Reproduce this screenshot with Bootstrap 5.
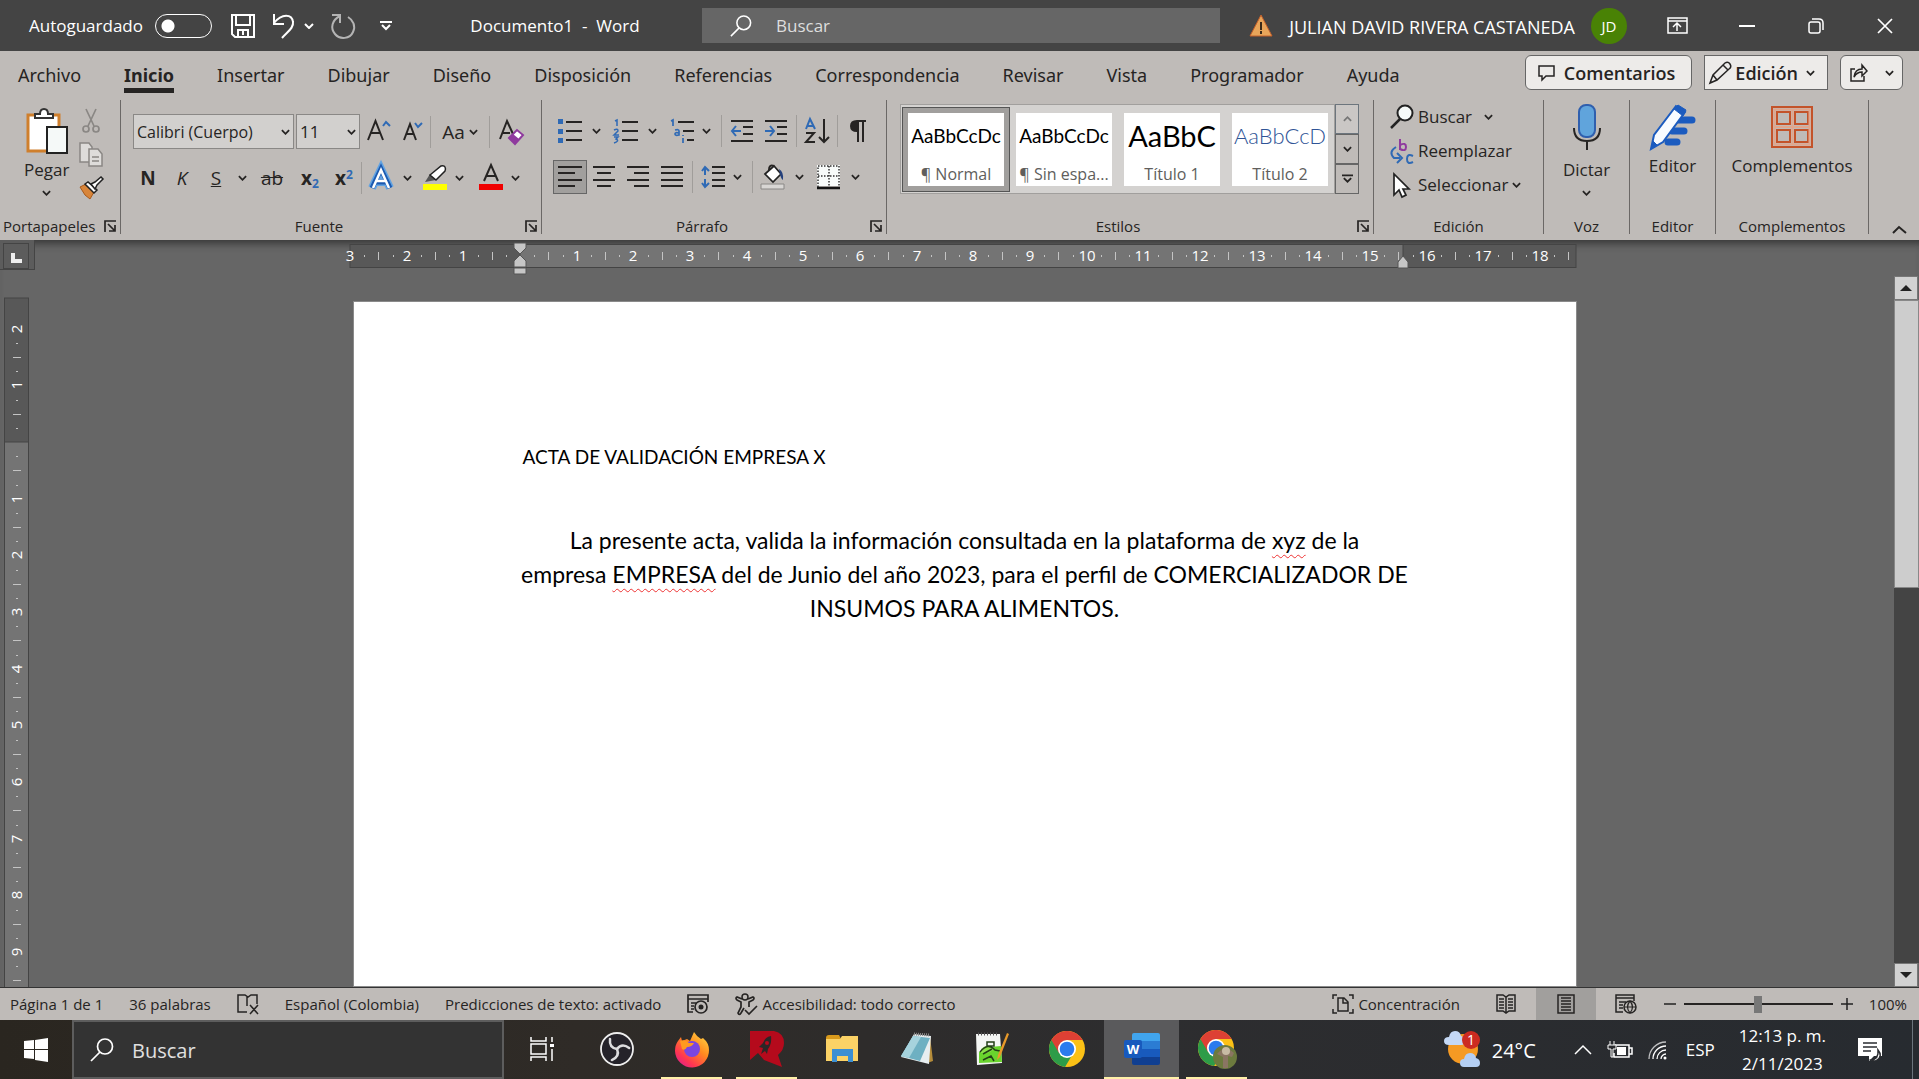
<!DOCTYPE html>
<html lang="es">
<head>
<meta charset="utf-8">
<meta name="viewport" content="width=device-width, initial-scale=1">
<title>Documento1 - Word</title>
<link href="https://cdn.jsdelivr.net/npm/bootstrap@5.3.0/dist/css/bootstrap.min.css" rel="stylesheet">
<style>
:root{--ink:#262423;--face:#bfbbb8;--bar:#444;--desk:#666;--blue:#2f6ab5}
body{font-family:"Open Sans","Noto Sans",sans-serif;font-size:17px;line-height:24px;color:var(--ink);background:var(--desk)}
button,input,select{font-family:inherit;color:inherit}
button{background:none;border:0;padding:0;line-height:inherit}
svg{display:block;flex:none;overflow:visible}
.ln{fill:none;stroke:currentColor;stroke-width:2}
.titlebar{height:51px;background:var(--bar);color:#fff}
.quick{width:702px;gap:16px;padding-left:29px}
.auto-sw.form-check-input{width:57px;height:24px;margin:0 2px 0 12px;float:none;background-color:transparent;border:1px solid #fff;border-radius:12px;background-image:radial-gradient(circle at 12px 50%,#fff 6px,transparent 7px)!important}
.finder{width:518px;height:35px;background:var(--desk)}
.finder input,.tasksearch input{background:none;border:0;outline:0;min-width:0}
.finder input::placeholder{color:#dedede;opacity:1}
.user{font-size:18px;padding-top:2px}
.avatar{width:36px;height:36px;background:#498205;font-size:15px}
.winbtn{width:69px;height:51px}
.ribbon{background:var(--face);height:189px}
.tabs{height:49px}
.tabs a{color:var(--ink);text-decoration:none;font-family:"Noto Sans","Open Sans",sans-serif;font-size:18px;padding:12px 25px 0 18px;display:block}
.tabs a span{display:block;height:29px}
.tabs a.on{font-weight:700}
.tabs a.on span{border-bottom:5px solid var(--ink);height:30px}
.pill{height:35px;background:#edebe9;border:1px solid #666;border-radius:6px;font-weight:600;font-size:18px}
.grp{height:134px;border-right:1px solid #6b6866}
.grp .body-area{height:116px}
.grplabel{font-size:15px;line-height:20px;height:20px}
.clips{margin-left:10px}
.tb{width:34px;height:34px;display:flex;align-items:center;justify-content:center}
.tb.on{background:#a19f9d;border:1px solid #666}
.cv{width:18px;height:34px;display:flex;align-items:center;justify-content:center}
.cv.slim{width:14px}
.rule{width:1px;height:32px;background:#a09d9a;margin:0 3px}
.scr{color:var(--blue);font-size:12px}
.combo select{appearance:none;height:35px;background:#d2d0ce;border:1px solid #8a8886;border-radius:0;padding:0 3px;width:100%}
.combo svg{position:absolute;right:4px;top:15px;pointer-events:none}
.gallery{height:90px;background:#d4d2d0;border:1px solid #a19f9d;padding:8px 6px 8px 7px;gap:12px}
.tile{width:96px;height:73px;background:#fff}
.tile.on{box-shadow:0 0 0 5px #a19f9d,0 0 0 6px #555}
.tile .sample{font-family:Lato,"Open Sans",sans-serif;color:#000;font-size:19px;line-height:28px;height:48px;padding-top:8px;white-space:nowrap}
.tile .sample.big{font-size:29px}
.tile .sample.second{font-size:22px;font-weight:300;color:#2f5496}
.tile .cap{color:#605e5c;font-size:16px;line-height:24px}
.galbtn{width:24px;height:30px;border:1px solid #666;display:flex;align-items:center;justify-content:center}
.cmd{height:34px;gap:4px;display:flex;align-items:center}
.desk{background:var(--desk);box-shadow:inset 0 9px 8px -6px #333}
.leftcol{width:35px}
.tabsel{width:35px;height:33px;background:#5c5c5c;border:solid #444;border-width:0 1px 1px 0;padding:3px 0 0 3px}
.tabsel button{width:26px;height:26px;border:1px solid #444;display:block}
.sheet{width:1224px;background:#fff;color:#000;border:1px solid #8a8a8a;font-family:Lato,"Open Sans",sans-serif;margin-top:33px;padding:141px 169px 0}
.sheet h1{font-size:19px;line-height:28px;font-weight:400;margin:0 0 52px}
.sheet p{font-size:23px;line-height:34px;text-align:center;white-space:nowrap;margin:0 -20px}
.miss{text-decoration:underline wavy #e33 1px;text-underline-offset:5px;text-decoration-skip-ink:none}
.ruler text{font-size:15px;fill:#fff;text-anchor:middle}
.scrollcol{width:25px;padding-top:36px}
.track{background:#444}
.sbtn{width:24px;height:24px;background:#d2d2d2;border:1px solid #777;display:flex;align-items:center;justify-content:center}
.thumb{height:288px;background:#cdcdcd;border:1px solid #888}
.status{height:33px;background:var(--face);border-top:1px solid #333;font-size:15px}
.status .view{width:60px;height:32px;display:flex;align-items:center;justify-content:center}
.status .view.on{background:#a19f9d}
.status .facts{gap:26px;padding-left:10px}
.zoomer{appearance:none;width:149px;height:20px;background:linear-gradient(var(--ink),var(--ink)) center/100% 2px no-repeat;margin:0}
.zoomer::-webkit-slider-thumb{appearance:none;width:8px;height:17px;background:#777}
.taskbar{height:59px;color:#fff;background:linear-gradient(90deg,#2a2620,#2f2b27 30%,#2d2d2f 60%,#272b30)}
.startbtn{width:72px}
.tasksearch{width:432px;background:#333;border:2px solid #5d5d5d;font-size:20px}
.tasksearch input{padding-top:4px}
.tasksearch input::placeholder{color:#e0e0e0;opacity:1}
.app{width:75px;display:flex;align-items:center;justify-content:center;border-bottom:2px solid transparent;position:relative}
.app.run::after{content:"";position:absolute;left:7px;right:7px;bottom:-2px;height:2px;background:#fff0a8}
.app.front{background:#5a5a5c}
.app.front::after{left:0;right:0}
.tray{gap:16px}
.temp{font-size:20px;margin:2px 22px 0 -4px}
.clock{line-height:28px;padding:0 16px 0 8px}
.edge{width:7px;margin-left:14px}
</style>
</head>
<body class="d-flex flex-column vh-100 overflow-hidden">
<svg width="0" height="0" class="position-absolute" aria-hidden="true">
<symbol id="chev" viewBox="0 0 10 6"><path d="M1 1l4 4 4-4" fill="none" stroke="currentColor" stroke-width="2"/></symbol>
<symbol id="lens" viewBox="0 0 24 24"><circle cx="15" cy="8.500" r="7.500" fill="none" stroke="currentColor" stroke-width="1.700"/><path d="M10 14L1 23" stroke="currentColor" stroke-width="1.700"/></symbol>
<symbol id="launch" viewBox="0 0 12 12"><path d="M1 12V1h11M4 4l7 7M11 5v6H5" fill="none" stroke="currentColor" stroke-width="1.700"/></symbol>
<symbol id="chrome" viewBox="0 0 36 36"><circle cx="18" cy="18" r="18" fill="#fbc116"/><path d="M18 18L2.400 9A18 18 0 0 0 16 35.900L25 21z" fill="#2d9c48"/><path d="M2.400 9A18 18 0 0 1 33.600 9H18L10 22z" fill="#dd4034"/><circle cx="18" cy="18" r="9" fill="#fff"/><circle cx="18" cy="18" r="7.300" fill="#2a7bee"/></symbol>
</svg>

<header class="titlebar d-flex align-items-center flex-shrink-0">
  <div class="quick d-flex align-items-center">
    <div class="d-flex align-items-center form-switch p-0">
      <label for="auto">Autoguardado</label>
      <input id="auto" type="checkbox" role="switch" class="form-check-input auto-sw">
    </div>
    <button aria-label="Guardar"><svg width="26" height="26" viewBox="0 0 26 26" class="ln"><path d="M2 2h22v22H5l-3-3zM6 2v10h14V2M8 24v-7h10v7M13 17v5"/></svg></button>
    <div class="d-flex align-items-center gap-2">
      <button aria-label="Deshacer"><svg width="24" height="26" viewBox="0 0 24 26" class="ln"><path d="M2 1v10h10M2 10C10 0 20 1 21 9c1 6-6 10-11 16"/></svg></button>
      <button aria-label="Más opciones de deshacer"><svg width="10" height="6"><use href="#chev"/></svg></button>
    </div>
    <button aria-label="Repetir"><svg width="26" height="26" viewBox="0 0 26 26" class="ln" stroke-opacity=".6"><path d="M2 2h8v8M10 3C2 7 0 15 5 21c5 6 15 5 18-2 3-6 0-12-5-15"/></svg></button>
    <button class="ms-2" aria-label="Personalizar barra"><svg width="12" height="10" viewBox="0 0 12 10" class="ln"><path d="M0 1h12M2 4l4 4 4-4"/></svg></button>
    <div class="flex-grow-1 text-center">Documento1 &nbsp;-&nbsp; Word</div>
  </div>
  <div class="finder d-flex align-items-center px-4">
    <svg width="22" height="22" class="ms-1"><use href="#lens"/></svg>
    <input type="text" class="ms-3 ps-2 flex-grow-1" placeholder="Buscar" aria-label="Buscar">
  </div>
  <div class="flex-grow-1 d-flex align-items-center justify-content-end">
    <svg width="24" height="23" viewBox="0 0 24 23"><path d="M12 1l11 21H1z" fill="#e8a55a" stroke="#c4602a"/><path d="M12 8v8M12 17v3" stroke="#3a2a1a" stroke-width="2"/></svg>
    <span class="user ms-3">JULIAN DAVID RIVERA CASTANEDA</span>
    <span class="avatar rounded-circle d-flex align-items-center justify-content-center ms-3 me-3">JD</span>
  </div>
  <button class="winbtn d-flex align-items-center justify-content-center" aria-label="Opciones de cinta"><svg width="21" height="17" viewBox="0 0 21 17" class="ln"><path d="M1 1h19v15H1zM1 4h19M10 14V7M6 10l4-4 4 4" stroke-width="1.500"/></svg></button>
  <button class="winbtn d-flex align-items-center justify-content-center" aria-label="Minimizar"><svg width="16" height="2"><path d="M0 1h16" stroke="#fff" stroke-width="2"/></svg></button>
  <button class="winbtn d-flex align-items-center justify-content-center" aria-label="Restaurar"><svg width="16" height="16" viewBox="0 0 16 16" class="ln"><rect x="1" y="4" width="11" height="11" rx="2" stroke-width="1.500"/><path d="M4 1h7q4 0 4 4v7" stroke-width="1.500"/></svg></button>
  <button class="winbtn d-flex align-items-center justify-content-center" aria-label="Cerrar"><svg width="16" height="16" viewBox="0 0 16 16" class="ln"><path d="M1 1l14 14M15 1L1 15" stroke-width="1.700"/></svg></button>
</header>

<section class="ribbon flex-shrink-0">
  <nav class="tabs d-flex">
    <a href="#"><span>Archivo</span></a><a href="#" class="on"><span>Inicio</span></a><a href="#"><span>Insertar</span></a><a href="#"><span>Dibujar</span></a><a href="#"><span>Diseño</span></a><a href="#"><span>Disposición</span></a><a href="#"><span>Referencias</span></a><a href="#"><span>Correspondencia</span></a><a href="#"><span>Revisar</span></a><a href="#"><span>Vista</span></a><a href="#"><span>Programador</span></a><a href="#"><span>Ayuda</span></a>
    <div class="ms-auto d-flex gap-2 pt-1 me-3">
      <button class="pill d-flex align-items-center me-1 ps-2 pe-3"><svg width="18" height="18" viewBox="0 0 18 18" class="ln ms-1 me-2"><path d="M1 2h15v10H8l-4 4v-4H1z" stroke-width="1.500"/></svg>Comentarios</button>
      <button class="pill rounded-0 d-flex align-items-center px-1 me-1"><svg width="22" height="24" viewBox="0 0 22 24" class="ln me-1"><path d="M1 22l3-8L16 2q3-2 5 1t-1 5L8 19zM4 14l4 5M14 4l5 5" stroke-width="1.500"/></svg>Edición<svg width="9" height="6" class="mx-2"><use href="#chev"/></svg></button>
      <button class="pill d-flex align-items-center px-2" aria-label="Compartir"><svg width="20" height="20" viewBox="0 0 20 20" class="ln"><path d="M6 6H2v12h13v-5M5 14q1-8 8-8V2l5 6-5 5v-4q-5 0-8 5z" stroke-width="1.500"/></svg><svg width="9" height="6" class="ms-3"><use href="#chev"/></svg></button>
    </div>
  </nav>

  <div class="d-flex">
    <div class="grp" style="width:121px">
      <div class="body-area d-flex">
        <button class="d-flex flex-column align-items-center ms-4 pt-2"><svg width="42" height="46" viewBox="0 0 42 46"><path d="M2 7h31v36H2z" fill="#fff" stroke="#cf7f2c" stroke-width="3"/><path d="M9 10V6h5q0-5 4-5t4 5h5v4z" fill="#fff" stroke="#333" stroke-width="2"/><path d="M21 19h20v26H21z" fill="#f5f9f8" stroke="#222" stroke-width="2"/></svg><span class="mt-1">Pegar</span><svg width="9" height="6" class="mt-2"><use href="#chev"/></svg></button>
        <div class="clips d-flex flex-column gap-2">
          <button class="pt-2" aria-label="Cortar"><svg width="24" height="26" viewBox="0 0 24 26"><g fill="none" stroke="#8a8784" stroke-width="1.700"><path d="M7 1l8 17M17 1L9 18"/><circle cx="7" cy="21" r="3"/><circle cx="17" cy="21" r="3"/></g></svg></button>
          <button aria-label="Copiar"><svg width="24" height="26" viewBox="0 0 24 26"><g fill="#dedcda" stroke="#8a8784" stroke-width="1.500"><path d="M1 1h9l3 4v15H1z"/><path d="M10 7h9l4 5v12H10z"/><path d="M13 15h7M13 19h7"/></g></svg></button>
          <button aria-label="Copiar formato"><svg width="24" height="24" viewBox="0 0 24 24"><path d="M1 11l6-3 8 8-4 7-5-4z" fill="#d8853a" stroke="#a85a1c"/><path d="M6 8l3-2 9 8-3 3z" fill="#fff" stroke="#222" stroke-width="1.500"/><path d="M12 8l4-2 6-5 2 2-6 6-2 4z" fill="#fff" stroke="#222" stroke-width="1.500"/></svg></button>
        </div>
      </div>
      <div class="grplabel d-flex align-items-center"><span style="padding-left:3px">Portapapeles</span><svg width="12" height="12" class="ms-auto me-1"><use href="#launch"/></svg></div>
    </div>

    <div class="grp" style="width:421px">
      <div class="body-area pt-3"><div style="margin:-2px 0 0 12px">
        <div class="d-flex align-items-center">
          <div class="combo position-relative" style="width:161px"><select aria-label="Fuente" style="font-size:16px"><option>Calibri (Cuerpo)</option></select><svg width="9" height="6"><use href="#chev"/></svg></div>
          <div class="combo position-relative" style="width:64px;margin:0 2px"><select aria-label="Tamaño"><option>11</option></select><svg width="9" height="6"><use href="#chev"/></svg></div>
          <button class="tb" aria-label="Aumentar fuente"><svg width="24" height="24" viewBox="0 0 24 24" class="ln"><path d="M1 20L8.500 1 16 20M4 13h9" /><path d="M16 6l3-4 4 4" stroke="#2f6ab5"/></svg></button>
          <button class="tb" aria-label="Reducir fuente"><svg width="20" height="22" viewBox="0 0 20 22" class="ln"><path d="M1 19L7 3l6 16M3 13h8"/><path d="M12 2l3 4 4-4" stroke="#2f6ab5"/></svg></button>
          <i class="rule m-0"></i>
          <button class="d-flex align-items-center justify-content-center" style="width:58px;font-size:19px">Aa<svg width="9" height="6" class="ms-1"><use href="#chev"/></svg></button>
          <i class="rule m-0"></i>
          <button class="tb" style="width:42px" aria-label="Borrar formato"><svg width="25" height="26" viewBox="0 0 25 26" class="ln"><path d="M1 20L8 2l6 13M3 14h8"/><path d="M10 19l8-8 6 5-8 9z" fill="#fff" stroke="#8f3a9e"/><path d="M10 19l4-4 6 5-4 5z" fill="#8f3a9e" stroke="none"/></svg></button>
        </div>
        <div class="d-flex align-items-center mt-2 pt-1" style="font-size:19px;margin-left:-2px">
          <button class="tb fw-bold">N</button><button class="tb fst-italic">K</button><button class="tb text-decoration-underline">S</button>
          <button class="cv" aria-label="Subrayado"><svg width="9" height="6"><use href="#chev"/></svg></button>
          <button class="tb text-decoration-line-through" style="width:42px">ab</button>
          <button class="tb fw-bold"><span>x<sub class="scr">2</sub></span></button>
          <button class="tb fw-bold"><span>x<sup class="scr">2</sup></span></button>
          <i class="rule m-0"></i>
          <button class="tb" style="width:38px" aria-label="Efectos de texto"><svg width="24" height="26" viewBox="0 0 24 26"><path d="M3 23L12 4l9 19M6 17h12" fill="none" stroke="#62a3e2" stroke-width="8"/><path d="M3 23L12 4l9 19M6 17h12" fill="none" stroke="#1c5ab0" stroke-width="5"/><path d="M4 23L12 5l8 18M7 16h10" fill="none" stroke="#fff" stroke-width="2.500"/></svg></button>
          <button class="cv slim" aria-label="Más efectos"><svg width="9" height="6"><use href="#chev"/></svg></button>
          <button class="tb ms-1" aria-label="Resaltado"><svg width="24" height="26" viewBox="0 0 24 26"><path d="M0 19h24v6H0z" fill="#ff0"/><path d="M2 17l5-8 6 6z" fill="#555"/><path d="M7 10L18 1q3-1 4 1t0 4l-9 9z" fill="#fff" stroke="#222" stroke-width="1.500"/></svg></button>
          <button class="cv slim" aria-label="Más resaltados"><svg width="9" height="6"><use href="#chev"/></svg></button>
          <button class="tb ms-2" aria-label="Color de fuente"><svg width="24" height="26" viewBox="0 0 24 26"><path d="M0 19h24v6H0z" fill="#f00000"/><path d="M5 16L12 0l7 16M8 11h8" class="ln"/></svg></button>
          <button class="cv slim" aria-label="Más colores"><svg width="9" height="6"><use href="#chev"/></svg></button>
        </div></div>
      </div>
      <div class="grplabel d-flex align-items-center"><span class="flex-grow-1 text-center pe-2">Fuente</span><svg width="12" height="12" class="me-1"><use href="#launch"/></svg></div>
    </div>

    <div class="grp" style="width:345px">
      <div class="body-area pt-3"><div style="margin:-2px 0 0 11px">
        <div class="d-flex align-items-center">
          <button class="tb" aria-label="Viñetas"><svg width="24" height="24" viewBox="0 0 24 24"><path d="M0 0h5v5H0zM0 10h5v5H0zM0 19h5v5H0z" fill="#2f6ab5"/><path class="ln" d="M8 3h16M8 12h16M8 21h16"/></svg></button>
          <button class="cv" aria-label="Más viñetas"><svg width="9" height="6"><use href="#chev"/></svg></button>
          <button class="tb ms-1" aria-label="Numeración"><svg width="24" height="24" viewBox="0 0 24 24"><path d="M1 2l2-1v6M0 11q4-2 4 1l-4 4h5M0 18h4l-2 2q4 2-2 4" fill="none" stroke="#2f6ab5" stroke-width="1.500"/><path class="ln" d="M8 3h16M8 12h16M8 21h16"/></svg></button>
          <button class="cv" aria-label="Más numeración"><svg width="9" height="6"><use href="#chev"/></svg></button>
          <button class="tb ms-1" aria-label="Lista multinivel"><svg width="24" height="24" viewBox="0 0 24 24"><path d="M1 2l2-1v6M5 11q4-1 4 1v4q-4 1-4-1t4-1M13 19v5M13 16v1" fill="none" stroke="#2f6ab5" stroke-width="1.700"/><path class="ln" d="M8 3h16M13 12h11M17 21h7"/></svg></button>
          <button class="cv slim" aria-label="Más niveles"><svg width="9" height="6"><use href="#chev"/></svg></button>
          <i class="rule ms-2"></i>
          <button class="tb" aria-label="Disminuir sangría"><svg width="22" height="22" viewBox="0 0 22 22"><path class="ln" d="M0 1h22M12 7h10M12 14h10M0 21h22"/><path d="M10 11H1M5 6l-4 5 4 5" fill="none" stroke="#2f6ab5" stroke-width="2"/></svg></button>
          <button class="tb" aria-label="Aumentar sangría"><svg width="22" height="22" viewBox="0 0 22 22"><path class="ln" d="M0 1h22M12 7h10M12 14h10M0 21h22"/><path d="M0 11h9M5 6l4 5-4 5" fill="none" stroke="#2f6ab5" stroke-width="2"/></svg></button>
          <i class="rule"></i>
          <button class="tb" aria-label="Ordenar"><svg width="24" height="26" viewBox="0 0 24 26"><path d="M1 11l4-10 5 10M3 8h5" fill="none" stroke="#2f6ab5" stroke-width="2"/><path class="ln" d="M1 15h8l-8 9h9M19 1v23M14 19l5 5 5-5"/></svg></button>
          <i class="rule"></i>
          <button class="tb" aria-label="Mostrar todo"><svg width="16" height="22" viewBox="0 0 16 22"><path d="M16 0H7Q0 0 0 6t7 6v10h2V2h3v20h2V2h2z" fill="currentColor"/></svg></button>
        </div>
        <div class="d-flex align-items-center mt-2 pt-1">
          <button class="tb on" aria-label="Alinear a la izquierda"><svg width="24" height="22" viewBox="0 0 24 22" class="ln"><path d="M0 1h24M0 7h17M0 14h24M0 20h17"/></svg></button>
          <button class="tb" aria-label="Centrar"><svg width="22" height="22" viewBox="0 0 22 22" class="ln"><path d="M0 1h22M4 7h14M0 14h22M4 20h14"/></svg></button>
          <button class="tb" aria-label="Alinear a la derecha"><svg width="22" height="22" viewBox="0 0 22 22" class="ln"><path d="M0 1h22M7 7h15M0 14h22M7 20h15"/></svg></button>
          <button class="tb" aria-label="Justificar"><svg width="22" height="22" viewBox="0 0 22 22" class="ln"><path d="M0 1h22M0 7h22M0 14h22M0 20h22"/></svg></button>
          <i class="rule"></i>
          <button class="tb" aria-label="Espaciado"><svg width="24" height="22" viewBox="0 0 24 22"><path d="M4 1v8M1 5l3-4 4 4M4 21v-8M1 17l3 4 4-4" fill="none" stroke="#2f6ab5" stroke-width="2"/><path class="ln" d="M11 1h13M11 7h13M11 14h13M11 20h13"/></svg></button>
          <button class="cv slim" aria-label="Más espaciado"><svg width="9" height="6"><use href="#chev"/></svg></button>
          <i class="rule ms-2"></i>
          <button class="tb" aria-label="Sombreado"><svg width="24" height="26" viewBox="0 0 24 26"><path d="M0 20h23v5H0z" fill="#d8d6d4" stroke="#8a8886"/><path d="M4 10l9-8 7 8-8 8z" fill="#fff" stroke="#222" stroke-width="1.700"/><path d="M8 6q0-6 5-4" class="ln" stroke-width="1.500"/><path d="M18 5q5 3 4 11-2-1-3-6z" fill="#24407c"/></svg></button>
          <button class="cv" aria-label="Más sombreado"><svg width="9" height="6"><use href="#chev"/></svg></button>
          <button class="tb ms-1" aria-label="Bordes"><svg width="24" height="24" viewBox="0 0 24 24"><path d="M0 0h23v21H0z" fill="#f8fbfa"/><path d="M1 22V1h21v21M12 1v20M1 11h21" fill="none" stroke="#333" stroke-width="1.500" stroke-dasharray="1.500 1.500"/><path d="M0 23h23" stroke="#111" stroke-width="2.500"/></svg></button>
          <button class="cv" aria-label="Más bordes"><svg width="9" height="6"><use href="#chev"/></svg></button>
        </div></div>
      </div>
      <div class="grplabel d-flex align-items-center"><span class="flex-grow-1 text-center pe-2">Párrafo</span><svg width="12" height="12" class="me-1"><use href="#launch"/></svg></div>
    </div>

    <div class="grp" style="width:487px">
      <div class="body-area d-flex pt-1" style="padding-left:13px">
        <div class="gallery d-flex">
          <button class="tile on"><div class="sample">AaBbCcDc</div><div class="cap">¶ Normal</div></button>
          <button class="tile"><div class="sample">AaBbCcDc</div><div class="cap">¶ Sin espa...</div></button>
          <button class="tile"><div class="sample big">AaBbC</div><div class="cap">Título 1</div></button>
          <button class="tile"><div class="sample second">AaBbCcD</div><div class="cap">Título 2</div></button>
        </div>
        <div class="d-flex flex-column">
          <button class="galbtn border-secondary" aria-label="Subir" style="background:#cac7c5"><svg width="9" height="6" viewBox="0 0 10 6"><path d="M1 5l4-4 4 4" fill="none" stroke="#777" stroke-width="2"/></svg></button>
          <button class="galbtn" aria-label="Bajar"><svg width="9" height="6"><use href="#chev"/></svg></button>
          <button class="galbtn" aria-label="Más estilos"><svg width="11" height="10" viewBox="0 0 12 10" class="ln"><path d="M0 1h12M2 4l4 4 4-4"/></svg></button>
        </div>
      </div>
      <div class="grplabel d-flex align-items-center"><span class="flex-grow-1 text-center pe-2">Estilos</span><svg width="12" height="12" class="me-1"><use href="#launch"/></svg></div>
    </div>

    <div class="grp" style="width:170px">
      <div class="body-area px-3">
        <button class="cmd"><svg width="24" height="24" viewBox="0 0 24 24"><circle cx="15" cy="8" r="7.500" fill="#f6faf9" stroke="#222" stroke-width="2"/><path d="M10 14L1 23" stroke="#222" stroke-width="2.500"/></svg>Buscar<svg width="9" height="6" class="ms-2"><use href="#chev"/></svg></button>
        <button class="cmd"><svg width="24" height="26" viewBox="0 0 24 26" fill="none" stroke-width="2"><path d="M10 1v11M10 7q6-3 6 2t-6 2" stroke="#8f3a9e"/><path d="M6 9Q-2 14 4 20h6M7 15l5 5-5 5M23 18q-6-3-6 3t6 3" stroke="#2f6ab5"/></svg>Reemplazar</button>
        <button class="cmd"><svg width="24" height="24" viewBox="0 0 24 24"><path d="M4 1v21l5-5 3 7 4-2-3-6h6z" fill="#fff" stroke="#222" stroke-width="1.700"/></svg>Seleccionar<svg width="9" height="6"><use href="#chev"/></svg></button>
      </div>
      <div class="grplabel text-center">Edición</div>
    </div>
    <div class="grp" style="width:86px">
      <button class="body-area w-100 d-flex flex-column align-items-center pt-1"><svg width="28" height="46" viewBox="0 0 28 46"><rect x="6" y="1" width="16" height="32" rx="7" fill="#60a4dc" stroke="#2f5fae" stroke-width="2"/><path class="ln" d="M1 24q0 13 13 13t13-13M14 37v9"/></svg><span class="mt-2">Dictar</span><svg width="9" height="6" class="mt-2"><use href="#chev"/></svg></button>
      <div class="grplabel text-center">Voz</div>
    </div>
    <div class="grp" style="width:86px">
      <button class="body-area w-100 d-flex flex-column align-items-center pt-1"><svg width="46" height="46" viewBox="0 0 46 46"><path d="M27 16h15M22 27h12M18 38h9" stroke="#1b5bbf" stroke-width="7" stroke-linecap="round"/><path d="M1 45l3-14L26 2l9 6-22 30z" fill="#f8fbff" stroke="#1b5bbf" stroke-width="2"/><path d="M24 5l4-4 8 5-3 6zM1 45l2-8 4 4z" fill="#1b5bbf" stroke="#1b5bbf"/></svg><span class="mt-1">Editor</span></button>
      <div class="grplabel text-center">Editor</div>
    </div>
    <div class="grp" style="width:153px">
      <button class="body-area w-100 d-flex flex-column align-items-center pt-1"><svg width="42" height="46" viewBox="0 0 42 46" fill="none" stroke="#c3532a" stroke-width="2"><path d="M1 3h40v40H1zM6 8h13v12H6zM24 8h13v12H24zM6 26h13v12H6zM24 26h13v12H24z"/><path d="M3.500 5.500h35v35h-35zM21.500 6v34M4 23h34" stroke="#e2a68c"/></svg><span class="mt-1">Complementos</span></button>
      <div class="grplabel text-center">Complementos</div>
    </div>
    <button class="ms-auto me-2 pe-1 align-self-end" aria-label="Contraer cinta"><svg width="15" height="9" viewBox="0 0 15 9" class="ln"><path d="M1 8l6-6 7 6"/></svg></button>
  </div>
</section>

<main class="desk flex-grow-1 d-flex overflow-hidden">
  <div class="leftcol d-flex flex-column">
    <div class="tabsel"><button aria-label="Tabulación"><svg width="24" height="24" viewBox="0 0 24 24"><path d="M9 9v8h9" fill="none" stroke="#eee" stroke-width="4"/></svg></button></div>
    <svg id="vruler" class="ruler ms-1" width="25" height="690" style="margin-top:28px"></svg>
  </div>
  <div class="flex-grow-1 d-flex flex-column align-items-center">
    <svg id="hruler" class="ruler mt-1 me-1 flex-shrink-0" width="1226" height="24"></svg>
    <article class="sheet flex-grow-1">
      <h1>ACTA DE VALIDACIÓN EMPRESA X</h1>
      <p>La presente acta, valida la información consultada en la plataforma de <span class="miss">xyz</span> de la<br>empresa <span class="miss">EMPRESA</span> del de Junio del año 2023, para el perfil de COMERCIALIZADOR DE<br>INSUMOS PARA ALIMENTOS.</p>
    </article>
  </div>
  <div class="scrollcol d-flex flex-column">
    <button class="sbtn" aria-label="Desplazar arriba"><svg width="12" height="6"><path d="M6 0l6 6H0z" fill="#222"/></svg></button>
    <div class="track flex-grow-1"><div class="thumb"></div></div>
    <button class="sbtn" aria-label="Desplazar abajo"><svg width="12" height="6"><path d="M0 0h12L6 6z" fill="#222"/></svg></button>
  </div>
</main>

<footer class="flex-shrink-0">
  <div class="status d-flex align-items-center">
    <div class="facts d-flex align-items-center">
      <span>Página 1 de 1</span>
      <span>36 palabras</span>
      <svg width="22" height="20" viewBox="0 0 22 20" class="ln"><path d="M10 18H1V1h7l3 2 3-2h6v9M10 3v9M13 11l8 9M21 11l-8 9" stroke-width="1.500"/></svg>
      <span>Español (Colombia)</span>
      <span>Predicciones de texto: activado</span>
      <svg width="22" height="20" viewBox="0 0 22 20" class="ln"><path d="M6 18H1V1h20v7M1 5h20M4 9h5M4 12h3M4 15h3" stroke-width="1.700"/><circle cx="14" cy="13" r="6" stroke-width="1.700"/><circle cx="14" cy="13" r="2.500" fill="currentColor" stroke="none"/></svg>
      <span class="d-flex align-items-center"><svg class="ln me-1" width="23" height="22" viewBox="0 0 23 22"><circle cx="10" cy="4" r="3" stroke-width="1.500"/><path d="M7 6L2 4Q0 5 2 7l4 2v5l-3 6q1 3 3 0l3-5M13 6l5-2q2 1 0 3l-4 2v5M10 17l4 4 8-8" stroke-width="1.700"/></svg>Accesibilidad: todo correcto</span>
    </div>
    <div class="ms-auto d-flex align-items-center">
      <svg width="22" height="20" viewBox="0 0 22 20" class="ln me-1"><path d="M5 1H1v4M1 15v4h4M17 1h4v4M21 15v4h-4M6 4h6l4 4v9H6zM11 4v5h5" stroke-width="1.500"/></svg>Concentración
      <button class="view ms-3" aria-label="Modo de lectura"><svg width="20" height="20" viewBox="0 0 20 20" class="ln"><path d="M1 1h6l3 2 3-2h6v16h-6l-3 2-3-2H1zM10 3v15M3 5h5M3 8h5M3 11h5M3 14h5M12 5h5M12 8h5M12 11h5M12 14h5" stroke-width="1.500"/></svg></button>
      <button class="view on" aria-label="Diseño de impresión"><svg width="18" height="20" viewBox="0 0 18 20" class="ln"><path d="M1 1h16v18H1zM4 4h10M4 7h10M4 10h10M4 13h10M4 16h10" stroke-width="1.500"/></svg></button>
      <button class="view" aria-label="Diseño web"><svg width="22" height="20" viewBox="0 0 22 20" class="ln"><path d="M8 18H1V1h18v6M1 4h18M4 8h7M4 11h4M4 14h4" stroke-width="1.500"/><circle cx="15" cy="13" r="6" stroke-width="1.500"/><path d="M9 13h12M15 7q-5 6 0 12M15 7q5 6 0 12" stroke-width="1.200"/></svg></button>
      <button class="ms-2" aria-label="Alejar"><svg width="12" height="12"><path d="M0 6h12" stroke="#222" stroke-width="1.500"/></svg></button>
      <input class="zoomer mx-2" type="range" min="0" max="100" value="50" aria-label="Zoom">
      <button aria-label="Acercar"><svg width="12" height="12"><path d="M0 6h12M6 0v12" stroke="#222" stroke-width="1.500"/></svg></button>
      <span class="ms-3 pe-1 me-2">100%</span>
    </div>
  </div>

  <div class="taskbar d-flex">
    <button class="startbtn d-flex align-items-center justify-content-center" aria-label="Inicio"><svg width="24" height="24" viewBox="0 0 24 24" fill="#fff"><path d="M0 3l10-1v9H0zM11 2l13-2v11H11zM0 12h10v9L0 20zM11 12h13v12l-13-2z"/></svg></button>
    <div class="tasksearch d-flex align-items-center px-3"><svg width="24" height="24"><use href="#lens"/></svg><input type="text" class="ms-3 flex-grow-1" placeholder="Buscar" aria-label="Buscar en Windows"></div>
    <button class="app" aria-label="Vista de tareas"><svg width="24" height="24" viewBox="0 0 24 24" class="ln"><path d="M1 0v4h15V0M1 7h15v10H1zM1 24v-4h15v4M22 0v5M22 12v12" stroke-width="1.500"/><path d="M20 7h4v3h-4z" fill="#fff" stroke="none"/></svg></button>
    <button class="app" aria-label="OBS"><svg width="34" height="34" viewBox="0 0 34 34"><circle cx="17" cy="17" r="16" fill="#25232a" stroke="#eee" stroke-width="1.800"/><g fill="none" stroke="#dcdcde" stroke-width="2.500" stroke-linecap="round"><path id="blade" d="M17 17q-8-1-7-10"/><use href="#blade" transform="rotate(120 17 17)"/><use href="#blade" transform="rotate(240 17 17)"/></g></svg></button>
    <button class="app run" aria-label="Firefox"><svg width="34" height="36" viewBox="0 0 34 36"><defs><linearGradient id="ff" x1="1" y1="0" x2=".2" y2="1"><stop offset="0" stop-color="#ffe34a"/><stop offset=".45" stop-color="#ff8a1f"/><stop offset=".8" stop-color="#ff3552"/><stop offset="1" stop-color="#e0218a"/></linearGradient></defs><path d="M3 10l3-4 1 4 5-2 3 2 4-9q3 5 7 7l2-1q6 5 6 12A17 17 0 0 1 0 20Q0 14 3 10z" fill="url(#ff)"/><circle cx="17" cy="18" r="8" fill="#7a46e0"/><path d="M5 10q5-2 9 2l5 0q-2 4-7 4-2 4-5 2z" fill="#ff9a20"/></svg></button>
    <button class="app run" aria-label="Rocket"><svg width="34" height="36" viewBox="0 0 34 36"><path d="M0 0h24q10 2 10 12 0 7-6 12l4 12-18-7-6-7-8 7z" fill="#b50a1c"/><path d="M21 5q-6 1-8 7l-4 4 4 1-2 6 4-3 2 3 1-5q4-5 3-13z" fill="#2c2626"/><circle cx="17" cy="12" r="2" fill="#b50a1c"/></svg></button>
    <button class="app" aria-label="Explorador"><svg width="32" height="28" viewBox="0 0 32 28"><path d="M0 3q0-3 3-3h10l2 4H0z" fill="#d99a1c"/><path d="M0 4h14l2-3h16v25H0z" fill="#fbd266"/><path d="M6 27V14h21v13h-5v-6H11v6z" fill="#3c8fd2"/></svg></button>
    <button class="app" aria-label="Bloc de notas"><svg width="34" height="32" viewBox="0 0 34 32"><path d="M30 3l3 25-6 2z" fill="#b58c3a"/><path d="M14 1l17 2-2 28-28-7z" fill="#e8eef0"/><path d="M13 3l17 2-10 23L1 23z" fill="#6eb0c2"/><path d="M13 3l8 1L9 25l-8-2z" fill="#a6d3dd"/><path d="M14 1l16 1" stroke="#888" stroke-width="3" stroke-dasharray="1 1"/></svg></button>
    <button class="app" aria-label="Notepad++"><svg width="34" height="34" viewBox="0 0 34 34"><path d="M1 2h24l2 29-25 2z" fill="#f4f6f4"/><path d="M4 20q11-6 22-6l1 16-23 1z" fill="#69d42d"/><path d="M6 17q6-6 13 0-4 5-13 4z" fill="#8be04a"/><path d="M3 2h21" stroke="#555" stroke-width="3" stroke-dasharray="1 2"/><path d="M5 20q8-10 15-2l5 1M8 22l9-5M12 10h7v4h-7zM8 28l8-4 3 5" fill="none" stroke="#234017" stroke-width="1.500"/><path d="M32 1l2 1-9 23-3 3 1-5z" fill="#e89a2a"/></svg></button>
    <button class="app" aria-label="Chrome"><svg width="36" height="36"><use href="#chrome"/></svg></button>
    <button class="app run front" aria-label="Word"><svg width="36" height="32" viewBox="0 0 36 32"><path d="M8 2q0-2 2-2h24q2 0 2 2v6H8z" fill="#41a5ee"/><path d="M8 8h28v8H8z" fill="#2b7cd3"/><path d="M8 16h28v8H8z" fill="#185abd"/><path d="M8 24h28v6q0 2-2 2H10q-2 0-2-2z" fill="#103f91"/><rect y="7" width="18" height="18" rx="2" fill="#185abd"/><text x="9" y="21" text-anchor="middle" font-size="13" font-weight="700" fill="#fff">W</text></svg></button>
    <button class="app run" aria-label="Chrome, perfil"><svg width="38" height="38" viewBox="0 0 38 38"><use href="#chrome" width="36" height="36"/><circle cx="27" cy="27" r="12" fill="#6c7a3e"/><path d="M19 24q8-10 17-1l-2 4-4-1v12h-5V27z" fill="#8a7562"/><circle cx="28" cy="21" r="4" fill="#c8bba4"/></svg></button>
    <div class="tray ms-auto d-flex align-items-center">
      <svg width="36" height="42" viewBox="0 0 36 42"><circle cx="19" cy="20" r="15" fill="#f59a23"/><path d="M5 16q-5 0-5-4t5-4q1-6 6-6t6 5q4 1 4 5t-4 4z" fill="#c4d8f5"/><path d="M20 38q-4 0-4-4t4-4q1-6 6-6t6 5q4 1 4 5t-4 4z" fill="#b4cef2"/><circle cx="27" cy="11" r="9" fill="#cc2b21"/><text x="27" y="16" font-size="14" text-anchor="middle" fill="#fff">1</text></svg>
      <span class="temp">24°C</span>
      <svg width="18" height="10" viewBox="0 0 18 10" class="ln"><path d="M1 9l8-8 8 8" stroke-width="1.500"/></svg>
      <svg width="24" height="18" viewBox="0 0 24 18"><path d="M7 4h14v12H6v-4M21 7h3v6h-3" fill="none" stroke="#fff" stroke-width="1.500"/><path d="M9 6h9v8H9z" fill="#fff"/><path d="M2 0v4M6 0v4M0 4h8v4H5v8H3V8H0z" fill="#2b2c2f" stroke="#fff"/></svg>
      <svg width="18" height="18" viewBox="0 0 18 18" fill="none" stroke="#fff" stroke-width="1.300"><path d="M1 18A17 17 0 0 1 18 1" stroke-opacity=".7"/><path d="M5 18A13 13 0 0 1 18 5M9 18a9 9 0 0 1 9-9M13 18a5 5 0 0 1 5-5"/><circle cx="17" cy="17" r="1.500" fill="#fff" stroke="none"/></svg>
      <span class="ps-1">ESP</span>
      <div class="clock text-center">12:13 p. m.<br>2/11/2023</div>
      <svg width="24" height="24" viewBox="0 0 24 24"><path d="M0 0h24v18h-8l-5 5v-5H0z" fill="#fff"/><path d="M5 5h14M5 9h14M5 13h8" stroke="#2a2c30" stroke-width="1.500"/><path d="M20 12q5 6-1 10-3 2-6 0 8-1 7-10z" fill="#fff" stroke="#2a2c30" stroke-width="1.500"/></svg>
      <i class="edge align-self-stretch border-start border-secondary"></i>
    </div>
  </div>
</footer>

<script>
// Both rulers share one routine: a number per centimetre, a long tick at the half and short ones at the quarters.
const pxPerCm = 1224 / 21.6;
function ruler(el, length, zero, end, vertical) {
  const cross = vertical ? 24 : 23;
  const box = (a, b, fill) => vertical
    ? `<rect x="0.5" y="${a}" width="${cross}" height="${b - a}" fill="${fill}" stroke="#444"/>`
    : `<rect x="${a}" y="0.5" width="${b - a}" height="${cross}" fill="${fill}" stroke="#444"/>`;
  let out = box(0, length, '#585858') + box(zero, end, '#747474');
  const first = vertical ? -8 : -12;
  for (let q = first; zero + q * pxPerCm / 4 < length; q++) {
    if (q === 0) continue;
    const at = Math.round(zero + q * pxPerCm / 4);
    if (q % 4 === 0) {
      out += vertical
        ? `<text transform="translate(18 ${at}) rotate(-90)">${Math.abs(q / 4)}</text>`
        : `<text x="${at}" y="17">${Math.abs(q / 4)}</text>`;
    } else {
      const h = q % 2 ? 1 : 4;
      out += vertical
        ? `<path d="M${13 - h} ${at}.5h${2 * h}" stroke="#c4c4c4"/>`
        : `<path d="M${at}.5 ${12 - h}v${2 * h}" stroke="#c4c4c4"/>`;
    }
  }
  el.innerHTML = out;
}
const h = document.getElementById('hruler');
ruler(h, 1226, 170, 1053, false);
h.innerHTML += `<g fill="#c6c6c6" stroke="#555"><path d="M164 -1h12v5l-6 6-6-6z"/><path d="M164 23v-6l6-6 6 6v6zM164 24h12v6h-12z"/><path d="M1048 24v-6l5-6 5 6v6z"/></g>`;
ruler(document.getElementById('vruler'), 690, 144, 700, true);
</script>
<script src="https://cdn.jsdelivr.net/npm/bootstrap@5.3.0/dist/js/bootstrap.bundle.min.js"></script>
</body>
</html>
